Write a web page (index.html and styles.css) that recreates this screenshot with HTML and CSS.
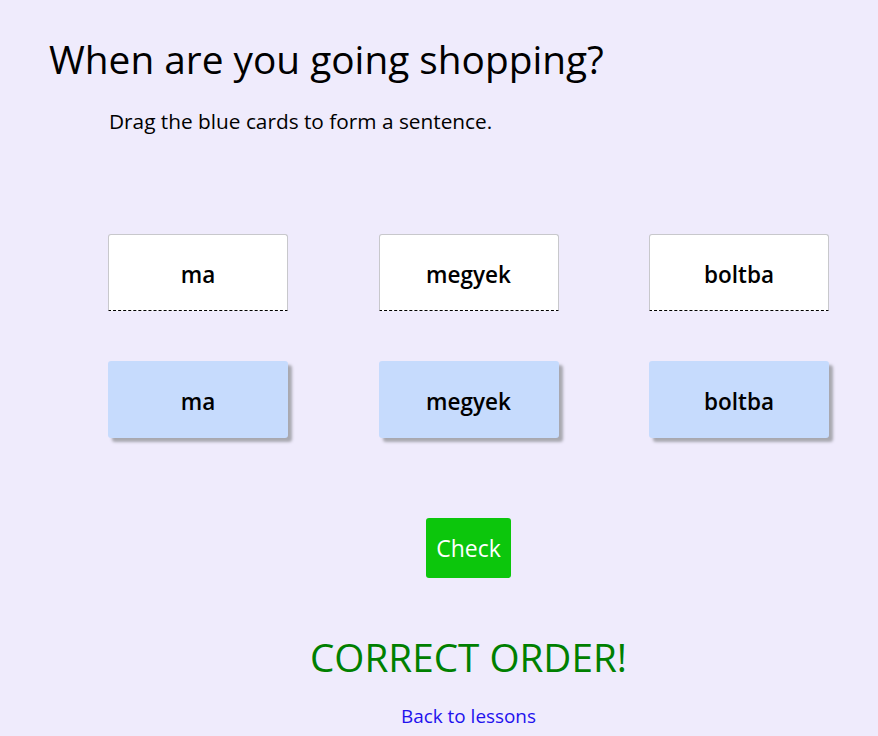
FILE: index.html
```html
<!DOCTYPE html>
<html>
<head>
<meta charset="utf-8">
<link rel="stylesheet" href="styles.css">
</head>
<body>
<div class="page">
  <h1 class="title">When are you going shopping?</h1>
  <p class="instructions">Drag the blue cards to form a sentence.</p>
  <div class="board">
    <div class="slots">
      <div class="card slot">ma</div>
      <div class="card slot">megyek</div>
      <div class="card slot">boltba</div>
    </div>
    <div class="slots">
      <div class="card word">ma</div>
      <div class="card word">megyek</div>
      <div class="card word">boltba</div>
    </div>
    <div class="actions">
      <button class="check">Check</button>
    </div>
    <div class="result">CORRECT ORDER!</div>
    <div class="back"><a href="#">Back to lessons</a></div>
  </div>
</div>
</body>
</html>
```
FILE: styles.css
```css
html, body {
  margin: 0;
  padding: 0;
  background: #efebfc;
}
body {
  font-family: "Open Sans", "Noto Sans", sans-serif;
  color: #000;
}
.page {
  padding: 35px 0 0 49px;
}
.title {
  margin: 0;
  font-size: 38.8px;
  font-weight: 400;
  line-height: 48px;
}
.instructions {
  margin: 25px 0 0 60px;
  font-size: 20.8px;
  line-height: 26px;
}
.board {
  margin-left: 59px;
  width: 721px;
  padding-top: 100px;
}
.slots {
  display: flex;
  justify-content: space-between;
  margin-bottom: 50px;
}
.card {
  width: 180px;
  height: 77px;
  box-sizing: border-box;
  display: flex;
  align-items: center;
  justify-content: center;
  font-size: 22.5px;
  font-weight: 600;
  border-radius: 3px;
  padding-top: 3px;
}
.slot {
  background: #fff;
  border: 1px solid #c8c8cc;
  border-bottom: 1px dashed #000;
  border-radius: 3px 3px 0 0;
}
.word {
  background: #c6dbfd;
  box-shadow: 4px 4px 3px #a8a8b0;
}
.actions {
  display: flex;
  justify-content: center;
  margin-top: 80px;
}
.check {
  width: 85px;
  height: 60px;
  background: #0cc60c;
  color: #fff;
  border: none;
  border-radius: 3px;
  font-family: inherit;
  font-size: 23px;
  padding: 0;
}
.result {
  text-align: center;
  color: #008000;
  font-size: 38.7px;
  line-height: 48px;
  margin-top: 55px;
}
.back {
  text-align: center;
  margin-top: 22px;
  font-size: 18.9px;
}
.back a {
  color: #2211ee;
  text-decoration: none;
}
```
